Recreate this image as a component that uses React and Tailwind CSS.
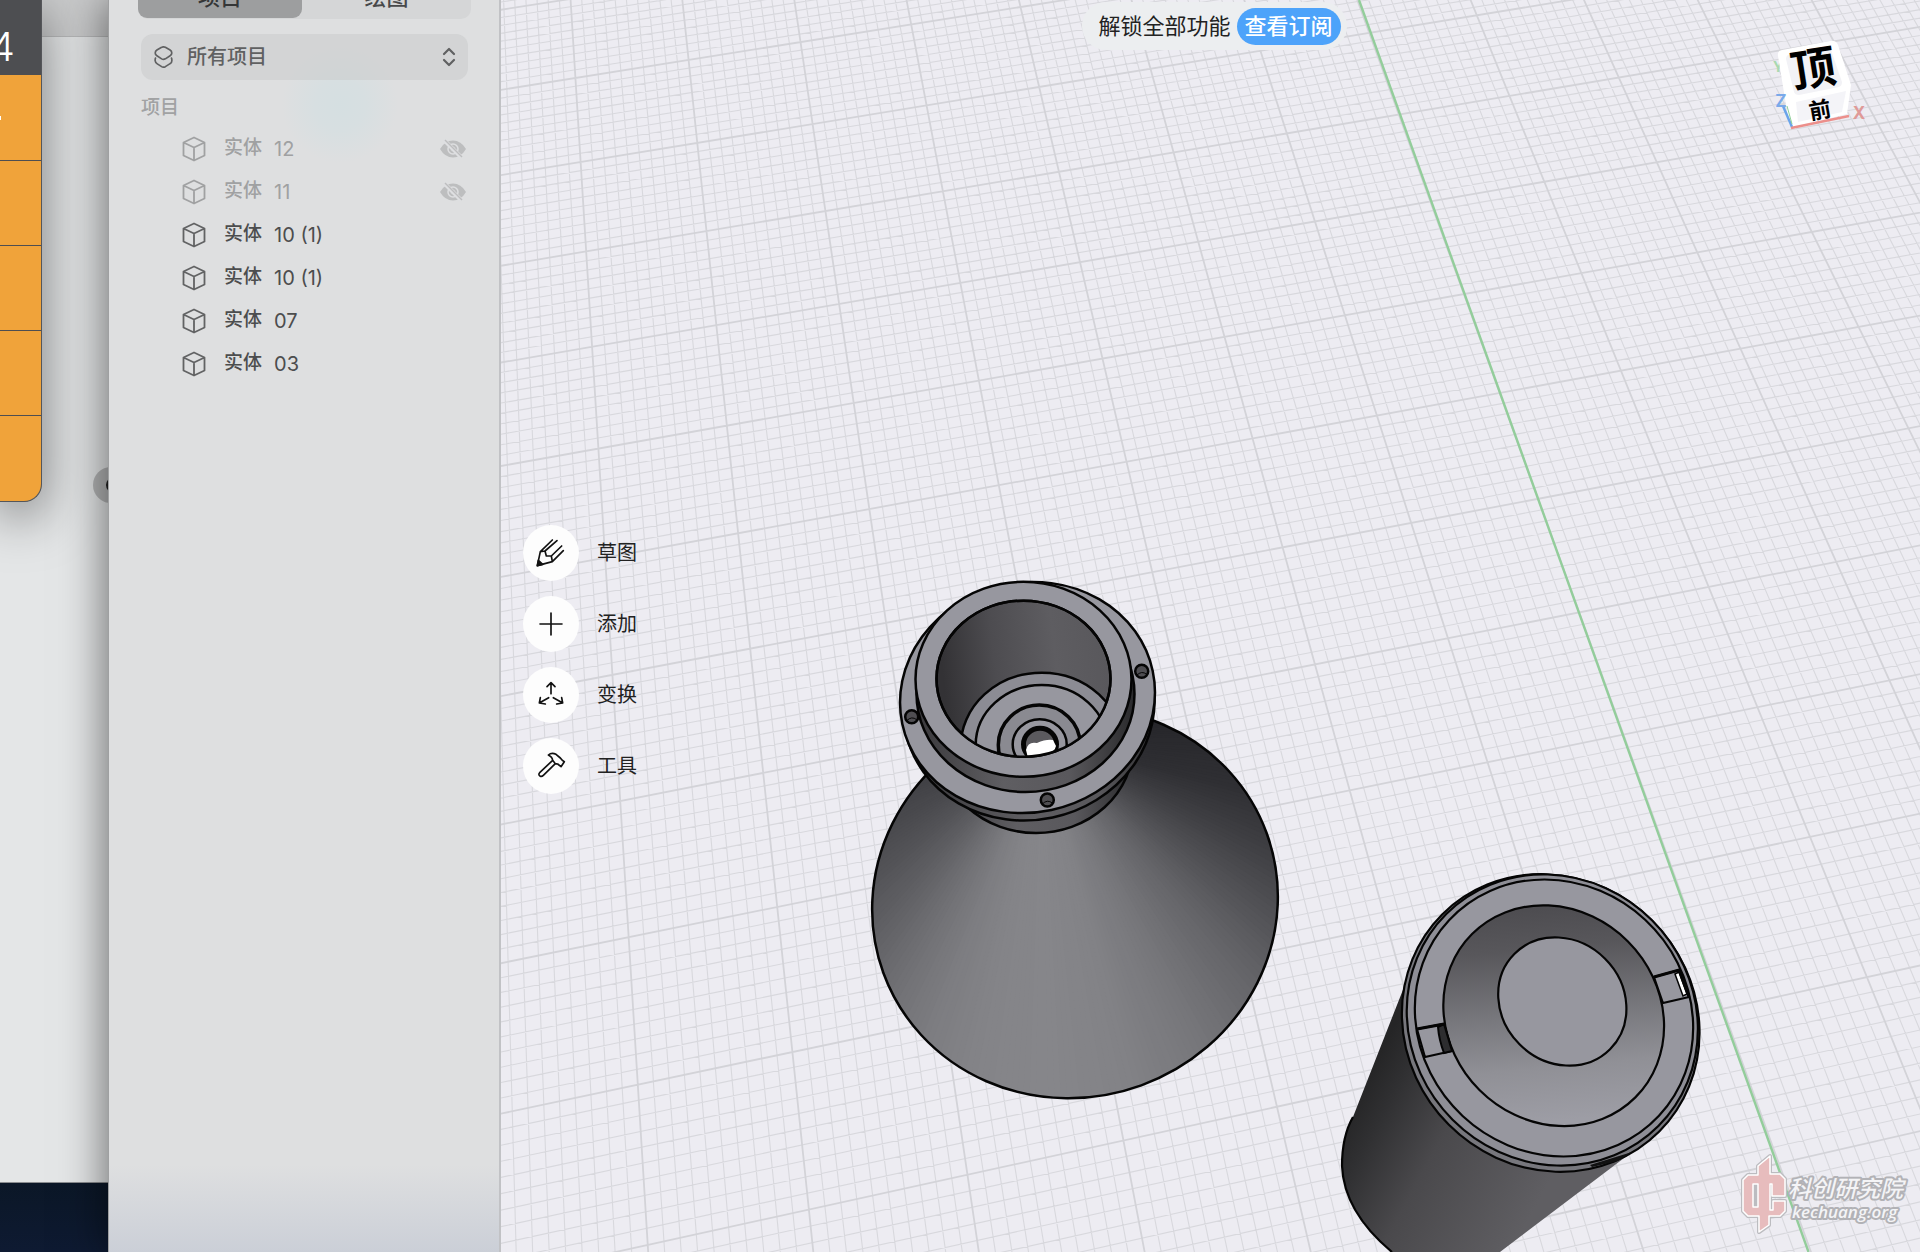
const FONT = "font-['Inter','Noto_Sans_CJK_SC',sans-serif]";

const bodies = [
  { id: 1, no: '12', hidden: true },
  { id: 2, no: '11', hidden: true },
  { id: 3, no: '10 (1)' },
  { id: 4, no: '10 (1)' },
  { id: 5, no: '07' },
  { id: 6, no: '03' },
];

// ground plane -> screen
function project(u, v) {
  const d = 1 + 0.0058 * u - 0.0302 * v;
  const x = (117.2 * u - 12.33 * v + 575.4) / d;
  const y = (-17.7 * u + 79.1 * v + 78) / d;
  return `${x.toFixed(1)} ${y.toFixed(1)}`;
}

function gridPath(major) {
  let d = '';
  for (let n = -50; n <= 190; n++) {
    if ((n % 10 === 0) !== major) continue;
    d += `M${project(n / 10, -5)}L${project(n / 10, 16)}`;
  }
  for (let n = -50; n <= 160; n++) {
    if ((n % 10 === 0) !== major) continue;
    d += `M${project(-5, n / 10)}L${project(19, n / 10)}`;
  }
  return d;
}

const minorGrid = gridPath(false);
const majorGrid = gridPath(true);

// brightness of the cone by direction, 0 = right, 90 = down
const coneStops = [
  [-90, 40], [-10, 38], [13, 47], [25, 62], [35, 78], [48, 100], [62, 118], [75, 130],
  [88, 134], [100, 132], [110, 125], [120, 112], [130, 96], [140, 83], [150, 73],
  [165, 62], [200, 50], [270, 40],
];

function coneShade(a) {
  for (let i = 1; i < coneStops.length; i++) {
    const [a1, v1] = coneStops[i];
    if (a <= a1) {
      const [a0, v0] = coneStops[i - 1];
      const v = Math.round(v0 + ((v1 - v0) * (a - a0)) / (a1 - a0));
      return `rgb(${v},${v},${v + 4})`;
    }
  }
  return '#28282c';
}

function wedge(a) {
  const p = (deg) => {
    const r = (deg * Math.PI) / 180;
    return `${(1042 + 460 * Math.cos(r)).toFixed(1)} ${(740 + 460 * Math.sin(r)).toFixed(1)}`;
  };
  return `M1042 740L${p(a)}L${p(a + 4)}Z`;
}

const wedges = Array.from({ length: 360 }, (_, i) => -90 + i);

function Nozzle() {
  return (
    <g stroke="#050505" strokeWidth="2.5" fill="none">
      <defs>
        <clipPath id="cone">
          <ellipse cx="1075" cy="903" rx="204" ry="194" transform="rotate(-20 1075 903)" />
        </clipPath>
        <clipPath id="bore">
          <ellipse cx="1023.5" cy="678.7" rx="87" ry="78" />
        </clipPath>
        <linearGradient id="wall" x1="0" y1=".1" x2="1" y2="0">
          <stop offset="0" stopColor="#333235" />
          <stop offset=".3" stopColor="#4d4c50" />
          <stop offset=".65" stopColor="#5e5d61" />
          <stop offset="1" stopColor="#58575b" />
        </linearGradient>
        <linearGradient id="collar" x1="0" y1="0" x2="1" y2="0">
          <stop offset="0" stopColor="#3a393c" />
          <stop offset=".4" stopColor="#5f5e62" />
          <stop offset=".7" stopColor="#59585c" />
          <stop offset="1" stopColor="#2a2a2c" />
        </linearGradient>
      </defs>
      <g clipPath="url(#cone)" stroke="none">
        {wedges.map((a) => (
          <path key={a} d={wedge(a)} fill={coneShade(a)} />
        ))}
      </g>
      <ellipse cx="1075" cy="903" rx="204" ry="194" transform="rotate(-20 1075 903)" />
      <ellipse cx="1036" cy="745" rx="97" ry="88" fill="url(#collar)" />
      <ellipse cx="1029" cy="706" rx="126" ry="114" transform="rotate(-12 1029 706)" fill="url(#collar)" />
      <ellipse cx="1027.5" cy="697.5" rx="128" ry="115" transform="rotate(-12 1027.5 697.5)" fill="#97979f" />
      <ellipse cx="1025.5" cy="694" rx="109" ry="98" fill="url(#collar)" />
      <ellipse cx="1023.5" cy="679.3" rx="108" ry="97.5" fill="#97979f" />
      <ellipse cx="1023.5" cy="678.7" rx="87" ry="78" fill="url(#wall)" />
      <g clipPath="url(#bore)">
        <ellipse cx="1041.7" cy="746.7" rx="81" ry="74" fill="#8c8c94" />
        <ellipse cx="1041.7" cy="745" rx="66" ry="60" fill="#97979f" />
        <ellipse cx="1039.3" cy="745" rx="41" ry="40" fill="#8a8a91" strokeWidth="3.5" />
        <ellipse cx="1039.7" cy="744.3" rx="27" ry="25" fill="#97979f" />
        <ellipse cx="1040" cy="744.3" rx="16.5" ry="16" fill="#5b5a5e" strokeWidth="5" />
        <path d="M1026 750Q1028 741 1037 743Q1046 739 1053 740L1056 746Q1055 752 1046 754L1028 758Z" fill="#fff" stroke="none" />
      </g>
      <ellipse cx="1023.5" cy="678.7" rx="87" ry="78" />
      {[[1141.7, 671.3], [911.7, 716.7], [1047.3, 800]].map(([x, y]) => (
        <g key={x}>
          <circle cx={x} cy={y} r="6.5" fill="#4f4e52" />
          <path d={`M${x - 5} ${y + 4}Q${x} ${y - 1} ${x + 5} ${y + 3}`} strokeWidth="1" />
        </g>
      ))}
    </g>
  );
}

function Tube() {
  return (
    <g stroke="#050505" strokeWidth="2.2" fill="none">
      <defs>
        <linearGradient id="tube" gradientUnits="userSpaceOnUse" x1="1365" y1="1080" x2="1550" y2="1180">
          <stop offset="0" stopColor="#252526" />
          <stop offset=".15" stopColor="#303032" />
          <stop offset=".45" stopColor="#4a494c" />
          <stop offset="1" stopColor="#5f5e62" />
        </linearGradient>
        <linearGradient
          id="cup"
          gradientUnits="userSpaceOnUse"
          x1="1545"
          y1="905"
          x2="1565"
          y2="1120"
          gradientTransform="rotate(-45 1553.7 1015.7)"
        >
          <stop offset="0" stopColor="#4d4c50" />
          <stop offset=".2" stopColor="#58575b" />
          <stop offset=".5" stopColor="#77777c" />
          <stop offset=".75" stopColor="#909096" />
          <stop offset="1" stopColor="#9d9da5" />
        </linearGradient>
      </defs>
      <path
        d="M1408 977L1353 1117Q1342 1136 1342 1166Q1344 1212 1392 1252L1500 1252L1640 1146Z"
        fill="url(#tube)"
        stroke="none"
      />
      <path d="M1353 1117Q1342 1136 1342 1166Q1344 1212 1392 1252" />
      <path d="M1408 977L1403 1000" />
      <ellipse cx="1550.7" cy="1023" rx="153.5" ry="144" transform="rotate(45 1550.7 1023)" fill="#77777d" />
      <ellipse cx="1552.3" cy="1020" rx="150" ry="141" transform="rotate(45 1552.3 1020)" fill="#8e8e96" />
      <path d="M1590 1165L1632 1152L1618 1161L1592 1167Z" fill="#111" stroke="none" />
      <ellipse cx="1554" cy="1018" rx="143.5" ry="134" transform="rotate(43 1554 1018)" fill="#97979f" />
      <ellipse cx="1553.7" cy="1015.7" rx="115.5" ry="105" transform="rotate(45 1553.7 1015.7)" fill="url(#cup)" />
      <ellipse cx="1562.3" cy="1001.5" rx="67.5" ry="60.5" transform="rotate(45 1562.3 1001.5)" fill="#97979f" />
      <g strokeWidth="2">
        <path d="M1654 977L1679 970L1689 997L1663 1003Z" fill="#97979f" />
        <path d="M1675 974L1679 972L1687 994L1683 996Z" fill="#fff" strokeWidth="1.5" />
        <path d="M1654 977L1679 970L1689 997" strokeWidth="3" />
        <path d="M1417 1029L1444 1024L1452 1051L1425 1057Z" fill="#97979f" />
        <path d="M1438 1027L1444 1024L1452 1051L1444 1053Q1439 1040 1438 1027Z" fill="#2d2d2f" />
        <path d="M1417 1029L1444 1024" strokeWidth="3" />
      </g>
    </g>
  );
}

function Scene() {
  return (
    <svg
      viewBox="501 0 1419 1252"
      preserveAspectRatio="xMidYMid slice"
      className="absolute inset-0 h-full w-full"
      aria-hidden="true"
    >
      <path d={minorGrid} stroke="#d8d8dd" strokeWidth="1.1" fill="none" />
      <path d={majorGrid} stroke="#d3d3d8" strokeWidth="1.8" fill="none" />
      <path d="M1359 0L1808.5 1252" stroke="#93cd9b" strokeWidth="2.4" />
      <Nozzle />
      <Tube />
    </svg>
  );
}

function ViewCube() {
  return (
    <svg viewBox="0 0 160 130" className="absolute top-5 right-5 h-[130px] w-[160px]" aria-hidden="true">
      <g className="font-['Inter','Noto_Sans_CJK_SC',sans-serif]" fontWeight="700" textAnchor="middle">
        <text x="38" y="52" fontSize="14" fill="#a9d9b0">Y</text>
        <path d="M38 36Q37 31 42 30L90 21Q96 20 98 25L111 65L107 94L54 107Q50 107 49 103Z" fill="#fff" />
        <path d="M46 39Q46 35 50 34L86 27Q90 27 91 30L102 62Q102 66 99 67L59 75Q55 75 54 72Z" fill="#f2f2f6" />
        <path d="M56 82L106 71L102 92L58 102Z" fill="#f4f4f8" />
        <path d="M43 86L52 107" stroke="#6aa4ea" strokeWidth="2.5" />
        <path d="M47 86L52 104" stroke="#8fcf98" strokeWidth="1" />
        <path d="M51 108L109 96" stroke="#ec8f8b" strokeWidth="2.5" />
        <text x="41" y="87" fontSize="17" fill="#7aa9ea">Z</text>
        <text x="119" y="99" fontSize="17" fill="#df9a98">X</text>
        <text x="73" y="65" fontSize="45" fill="#000" transform="rotate(-9 73 48)">顶</text>
        <text x="80" y="98" fontSize="22" fill="#000" transform="rotate(-10 80 90)">前</text>
      </g>
    </svg>
  );
}

function Watermark() {
  return (
    <svg viewBox="0 0 200 122" className="absolute right-0 bottom-0 h-[122px] w-[200px]" aria-label="kechuang.org">
      <g stroke="#bcbcc0" strokeWidth="4" strokeLinejoin="round" fill="#bcbcc0">
        <path d="M38 36L50 26V44H60L65 49V66H52V54H50V80H53V71H65V81L60 86H49V95L39 102V86H28L23 81V50L28 45H38Z" />
      </g>
      <path
        fillRule="evenodd"
        d="M38 36L50 26V44H60L65 49V66H52V54H50V80H53V71H65V81L60 86H49V95L39 102V86H28L23 81V50L28 45H38ZM33 54V77H38V54Z"
        fill="#e7bcbd"
        stroke="#fff"
        strokeWidth="1.5"
        strokeLinejoin="round"
      />
      <g fill="#f4f4f6" stroke="#b2b2b6" strokeWidth="4" strokeLinejoin="round" paintOrder="stroke" fontStyle="italic">
        <text x="68" y="67" fontSize="23" fontWeight="500" fontFamily="'Noto Sans CJK SC',sans-serif">科创研究院</text>
        <text x="72" y="88" fontSize="17" fontWeight="600" fontFamily="'Open Sans',sans-serif">kechuang.org</text>
      </g>
    </svg>
  );
}

function CubeIcon() {
  return (
    <svg viewBox="0 0 24 26" className="h-[26px] w-6" fill="none" stroke="currentColor" strokeWidth="1.8" strokeLinejoin="round">
      <path d="M12 1.5L22.5 6.5V19.5L12 24.5L1.5 19.5V6.5ZM1.5 6.5L12 11.5L22.5 6.5M12 11.5V24.5" />
    </svg>
  );
}

function HiddenIcon() {
  return (
    <svg viewBox="0 0 26 20" className="h-5 w-[26px]">
      <path d="M0 10Q5 1.5 13 1.5T26 10Q21 18.5 13 18.5T0 10Z" fill="#bdbebf" />
      <circle cx="13" cy="10" r="5" fill="none" stroke="#dedfe1" strokeWidth="1.5" />
      <circle cx="13" cy="10" r="2" fill="#dedfe1" />
      <path d="M4 1L21 18" stroke="#dedfe1" strokeWidth="4" />
      <path d="M5 1L22 18" stroke="#bdbebf" strokeWidth="1.5" />
    </svg>
  );
}

const tools = [
  {
    label: '草图',
    icon: (
      <>
        <path d="M4 -39L-32 -4L-41 38L4 26L37 -7M18 -37L-18 -6L-14 9L1 9L4 26M1 9L32 -21M-32 -4L-18 -6" />
        <path d="M-38 22L-41 38L-25 34Z" fill="currentColor" />
      </>
    ),
  },
  { label: '添加', icon: <path d="M-33 0H33M0 -33V33" /> },
  {
    label: '变换',
    icon: <path d="M0 -4V-36M-12 -25L0 -37L12 -25M-7 8L-34 23M-32 8L-35 24L-17 27M7 8L34 23M32 8L35 24L17 27" />,
  },
  {
    label: '工具',
    icon: (
      <path d="M5 -17L-34 20Q-39 26 -33 30Q-28 33 -23 28L13 -7M-8 -33Q2 -42 15 -35L28 -24Q33 -17 40 -13L30 2L20 -6L13 -7L5 -17Q4 -27 -8 -33Z" />
    ),
  },
];

function Desktop() {
  return (
    <div className="relative flex w-[108px] shrink-0 flex-col overflow-hidden bg-[#e4e6e7]">
      <div className="h-[37px] border-b border-[#b9babb] bg-[#cbcccd]" />
      <div className="grow" />
      <div className="h-[70px] border-t border-[#8b8d90] bg-linear-to-b from-[#0b1727] to-[#0e1a32]" />
      <div className="absolute top-[467px] left-[93px] flex h-9 w-9 items-center rounded-full bg-[#b4b5b6] pl-[13px]">
        <div className="h-4 w-4 rounded-full bg-[#222]" />
      </div>
      <div className="absolute top-0 left-0 flex w-[42px] flex-col overflow-hidden rounded-br-[18px] border-r border-b border-[#55565a] bg-[#4d4e51] shadow-[0_14px_50px_rgba(0,0,0,0.5)]">
        <div className="flex h-[75px] items-end justify-end pr-[26px] pb-2 font-['Inter',sans-serif] text-[40px] leading-none font-light text-white">
          4
        </div>
        <div className="flex flex-col gap-px">
          <div className="flex h-[85px] items-center bg-[#f0a33a]">
            <div className="h-1 w-px bg-white" />
          </div>
          <div className="h-[84px] bg-[#f0a33a]" />
          <div className="h-[84px] bg-[#f0a33a]" />
          <div className="h-[84px] bg-[#f0a33a]" />
          <div className="h-[85px] bg-[#f0a33a]" />
        </div>
      </div>
    </div>
  );
}

function Sidebar() {
  return (
    <aside className="relative z-10 flex w-[393px] shrink-0 flex-col border-r-2 border-l border-r-[#c1c2c5] border-l-[#9fa0a1] bg-[radial-gradient(circle_at_231px_105px,#d5dfe1_0,#d7dfe1_25px,#dedfe100_58px),linear-gradient(to_bottom,#dedfe100_1165px,#cbcfd7_1252px)] bg-[#dedfe0] pr-[31px] pl-8 shadow-[-4px_0_40px_rgba(0,0,0,0.5)]">
      <div className="-mt-6 -ml-[3px] flex h-[43px] w-[333px] shrink-0 rounded-[10px] bg-[#d5d6d7] pb-px text-[22px] font-medium text-[#48494a]">
        <button className="w-[164px] rounded-[9px] bg-[#9d9e9f] text-[#353637]">项目</button>
        <button className="grow">绘图</button>
      </div>
      <div className="relative mt-[15px] h-[46px] shrink-0 text-[#606162]">
        <select
          aria-label="筛选"
          className="h-full w-full appearance-none rounded-xl bg-[#c8c9ca]/50 pl-[46px] text-[20px] font-medium"
        >
          <option>所有项目</option>
        </select>
        <svg viewBox="0 0 55 65" className="absolute top-3 left-[13px] h-[22px] w-[19px]" fill="none" stroke="currentColor" strokeWidth="5" strokeLinejoin="round">
          <path d="M22 4Q27 1 33 4L47 12Q52 15 52 21Q52 26 47 29L33 38Q27 41 22 38L8 29Q3 26 3 21Q3 15 8 12ZM5 34Q2 38 3 44Q4 50 8 52L22 61Q27 64 33 61L47 52Q52 50 52 44Q53 38 50 34" />
        </svg>
        <svg viewBox="0 0 14 20" className="absolute top-[13px] right-3 h-5 w-[14px]" fill="none" stroke="currentColor" strokeWidth="2.2" strokeLinecap="round" strokeLinejoin="round">
          <path d="M2 7L7 2L12 7M2 13L7 18L12 13" />
        </svg>
      </div>
      <h2 className="mt-[13px] h-[30px] text-[19px] leading-[30px] font-medium text-[#a1a2a3]">项目</h2>
      <ul className="mt-1">
        {bodies.map((b) => (
          <li
            key={b.id}
            className={`flex h-[43px] items-center pr-[2px] pl-[41px] text-[19px] font-medium ${b.hidden ? 'text-[#a0a1a2]' : 'text-[#4c4d4e]'}`}
          >
            <span className={b.hidden ? '' : 'text-[#626364]'}>
              <CubeIcon />
            </span>
            <span className="ml-[18px]">实体</span>
            <span className="ml-3 grow text-[20px] font-normal">{b.no}</span>
            {b.hidden && <HiddenIcon />}
          </li>
        ))}
      </ul>
    </aside>
  );
}

export default function App() {
  return (
    <div className={`flex h-screen w-full overflow-hidden ${FONT}`}>
      <Desktop />
      <Sidebar />
      <main className="relative z-20 grow overflow-hidden bg-[#edecf2]">
        <Scene />
        <div className="relative flex h-[50px] justify-center pt-[2px] pl-2">
          <div className="flex h-12 items-center gap-[6px] rounded-full bg-[#eceef0] pr-[6px] pl-4 text-[22px] text-[#222]">
            <span className="whitespace-nowrap">解锁全部功能</span>
            <button className="h-[37px] rounded-full bg-[#4da3fa] px-2 leading-none font-medium text-white">
              查看订阅
            </button>
          </div>
        </div>
        <div className="relative mt-[475px] ml-[22px] flex w-max flex-col gap-[15px]">
          {tools.map((t) => (
            <button key={t.label} className="flex items-center gap-[18px] text-[20px] text-[#222]">
              <span className="h-14 w-14 rounded-full bg-[#fdfdfd] text-[#111]">
                <svg viewBox="-84 -84 168 168" className="h-14 w-14" fill="none" stroke="currentColor" strokeWidth="5" strokeLinecap="round" strokeLinejoin="round">
                  {t.icon}
                </svg>
              </span>
              {t.label}
            </button>
          ))}
        </div>
        <ViewCube />
        <Watermark />
      </main>
    </div>
  );
}
